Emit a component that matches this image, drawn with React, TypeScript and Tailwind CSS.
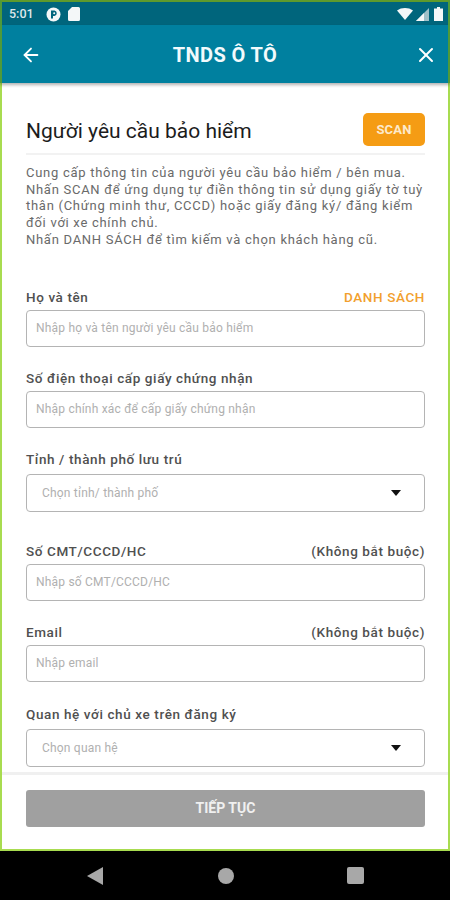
import { ArrowLeft, X } from "lucide-react";

function Field({ label, hint, action, placeholder, select, top }: { label: string; hint?: string; action?: string; placeholder: string; select?: boolean; top: string }) {
  return (
    <div className={top}>
      <div className="flex h-[18px] items-center justify-between text-[13.5px] leading-[18px]">
        <span className="text-[#505050] font-medium tracking-[0.6px]">{label}</span>
        {hint && <span className="text-[#505050] font-medium tracking-[0.6px]">{hint}</span>}
        {action && <span className="text-[#f29f2e] font-medium tracking-[0.6px]">{action}</span>}
      </div>
      {select ? (
        <div className="mt-[6px] flex h-[38px] items-center justify-between rounded-[4px] border border-[#b4b4b4] pl-[15px] pr-[23px]">
          <span className="text-[12px] tracking-[0.2px] text-[#b0b0b0]">{placeholder}</span>
          <svg width="10" height="6" viewBox="0 0 10 6"><path d="M0 0h10L5 6z" fill="#111" /></svg>
        </div>
      ) : (
        <div className="mt-[4px] flex h-[37px] items-center rounded-[4px] border border-[#b4b4b4] pl-[9px]">
          <span className="text-[12px] tracking-[0.2px] text-[#b0b0b0]">{placeholder}</span>
        </div>
      )}
    </div>
  );
}

export default function App() {
  return (
    <div className="flex h-[900px] w-[450px] flex-col overflow-hidden bg-white font-['Roboto',sans-serif]">
      {/* status bar */}
      <div className="flex h-[25px] shrink-0 items-center justify-between border-t-2 border-[#5f9a2c] border-x-2 border-x-[#4f9a3a] bg-[#00657c] pl-[7px] pr-[5px] pt-[1px]">
        <div className="flex items-center">
          <span className="text-[12.5px] font-medium text-[#dfe8ea]">5:01</span>
          <svg className="ml-[12px]" width="15" height="15" viewBox="0 0 15 15">
            <circle cx="7.5" cy="7.5" r="7" fill="#f4f7f8" />
            <path d="M5 3.5v8h2V9h1.500a2.800 2.800 0 0 0 0-5.500z" fill="#00657c" />
            <circle cx="8.2" cy="6.2" r="1" fill="#f4f7f8" />
          </svg>
          <svg className="ml-[7px]" width="12" height="14" viewBox="0 0 12 14">
            <path d="M4 0h6.500A1.500 1.500 0 0 1 12 1.500V12.500A1.500 1.500 0 0 1 10.500 14H1.500A1.500 1.500 0 0 1 0 12.500V4z" fill="#f4f7f8" />
          </svg>
        </div>
        <div className="flex items-center">
          <svg width="16" height="12" viewBox="0 0 16 12"><path d="M0 2.500C4.500-.8 11.500-.8 16 2.500L8 12z" fill="#f4f7f8" /></svg>
          <svg className="ml-[3px]" width="13" height="13" viewBox="0 0 13 13">
            <path d="M13 0v13H0z" fill="#9fc0c8" />
            <path d="M8 5v8H0z" fill="#f4f7f8" />
          </svg>
          <svg className="ml-[5px]" width="9" height="14" viewBox="0 0 9 14"><path d="M3 0h3v1.500h3V14H0V1.500h3z" fill="#f4f7f8" /></svg>
        </div>
      </div>

      {/* header */}
      <div className="relative z-10 flex h-[58px] shrink-0 items-center justify-between border-x-2 border-x-[#4f9a3a] bg-[#00809f] pl-[18px] pr-[13px] pt-[1px] shadow-[0_2px_3px_rgba(0,0,0,0.3)]">
        <ArrowLeft className="h-[22px] w-[22px] text-white" strokeWidth={2} />
        <span className="ml-[-6px] text-[20px] font-bold tracking-[0.4px] text-[#f2fafc]">TNDS Ô TÔ</span>
        <X className="mr-[-3px] h-[24px] w-[24px] text-white" strokeWidth={2} />
      </div>

      {/* form */}
      <div className="flex min-h-0 flex-1 flex-col overflow-hidden border-x-2 border-x-[#a8dc50]">
        <div className="min-h-0 flex-1 overflow-hidden pl-[24px] pr-[23px]">
          <div className="flex h-[72px] items-end justify-between border-b-2 border-[#f2f2f2] pb-[7px]">
            <span className="mb-[2px] text-[21px] leading-[26px] text-[#1c1c1c]">Người yêu cầu bảo hiểm</span>
            <div className="flex h-[33px] w-[62px] items-center justify-center rounded-[5px] bg-[#f59c14] text-[13px] font-bold tracking-[0.2px] text-[#fdeacb]">SCAN</div>
          </div>
          <p className="mt-[10px] text-[13px] leading-[16.7px] tracking-[0.72px] text-[#6a6a6a]">
            Cung cấp thông tin của người yêu cầu bảo hiểm / bên mua.<br />
            Nhấn SCAN để ứng dụng tự điền thông tin sử dụng giấy tờ tuỳ thân (Chứng minh thư, CCCD) hoặc giấy đăng ký/ đăng kiểm đối với xe chính chủ.<br />
            Nhấn DANH SÁCH để tìm kiếm và chọn khách hàng cũ.
          </p>
          <Field top="mt-[39px]" label="Họ và tên" action="DANH SÁCH" placeholder="Nhập họ và tên người yêu cầu bảo hiểm" />
          <Field top="mt-[22px]" label="Số điện thoại cấp giấy chứng nhận" placeholder="Nhập chính xác để cấp giấy chứng nhận" />
          <Field top="mt-[22px]" label="Tỉnh / thành phố lưu trú" placeholder="Chọn tỉnh/ thành phố" select />
          <Field top="mt-[30px]" label="Số CMT/CCCD/HC" hint="(Không bắt buộc)" placeholder="Nhập số CMT/CCCD/HC" />
          <Field top="mt-[22px]" label="Email" hint="(Không bắt buộc)" placeholder="Nhập email" />
          <Field top="mt-[23px]" label="Quan hệ với chủ xe trên đăng ký" placeholder="Chọn quan hệ" select />
        </div>

        {/* footer */}
        <div className="h-[79px] shrink-0 border-t-[3px] border-[#f0f0f0] border-b-2 border-b-[#a8dc50] pl-[24px] pr-[23px] pt-[15px]">
          <div className="flex h-[37px] items-center justify-center rounded-[3px] bg-[#a0a0a0] text-[14px] font-bold text-[#f0f0f0]">TIẾP TỤC</div>
        </div>
      </div>

      {/* nav bar */}
      <div className="flex h-[49px] shrink-0 items-center bg-black pl-[87px]">
        <svg width="16" height="18" viewBox="0 0 16 18"><path d="M16 0v18L0 9z" fill="#a8a8a8" /></svg>
        <div className="ml-[115px] h-[16px] w-[16px] rounded-full bg-[#a8a8a8]" />
        <div className="ml-[113px] h-[17px] w-[17px] rounded-[2px] bg-[#a8a8a8]" />
      </div>
    </div>
  );
}
